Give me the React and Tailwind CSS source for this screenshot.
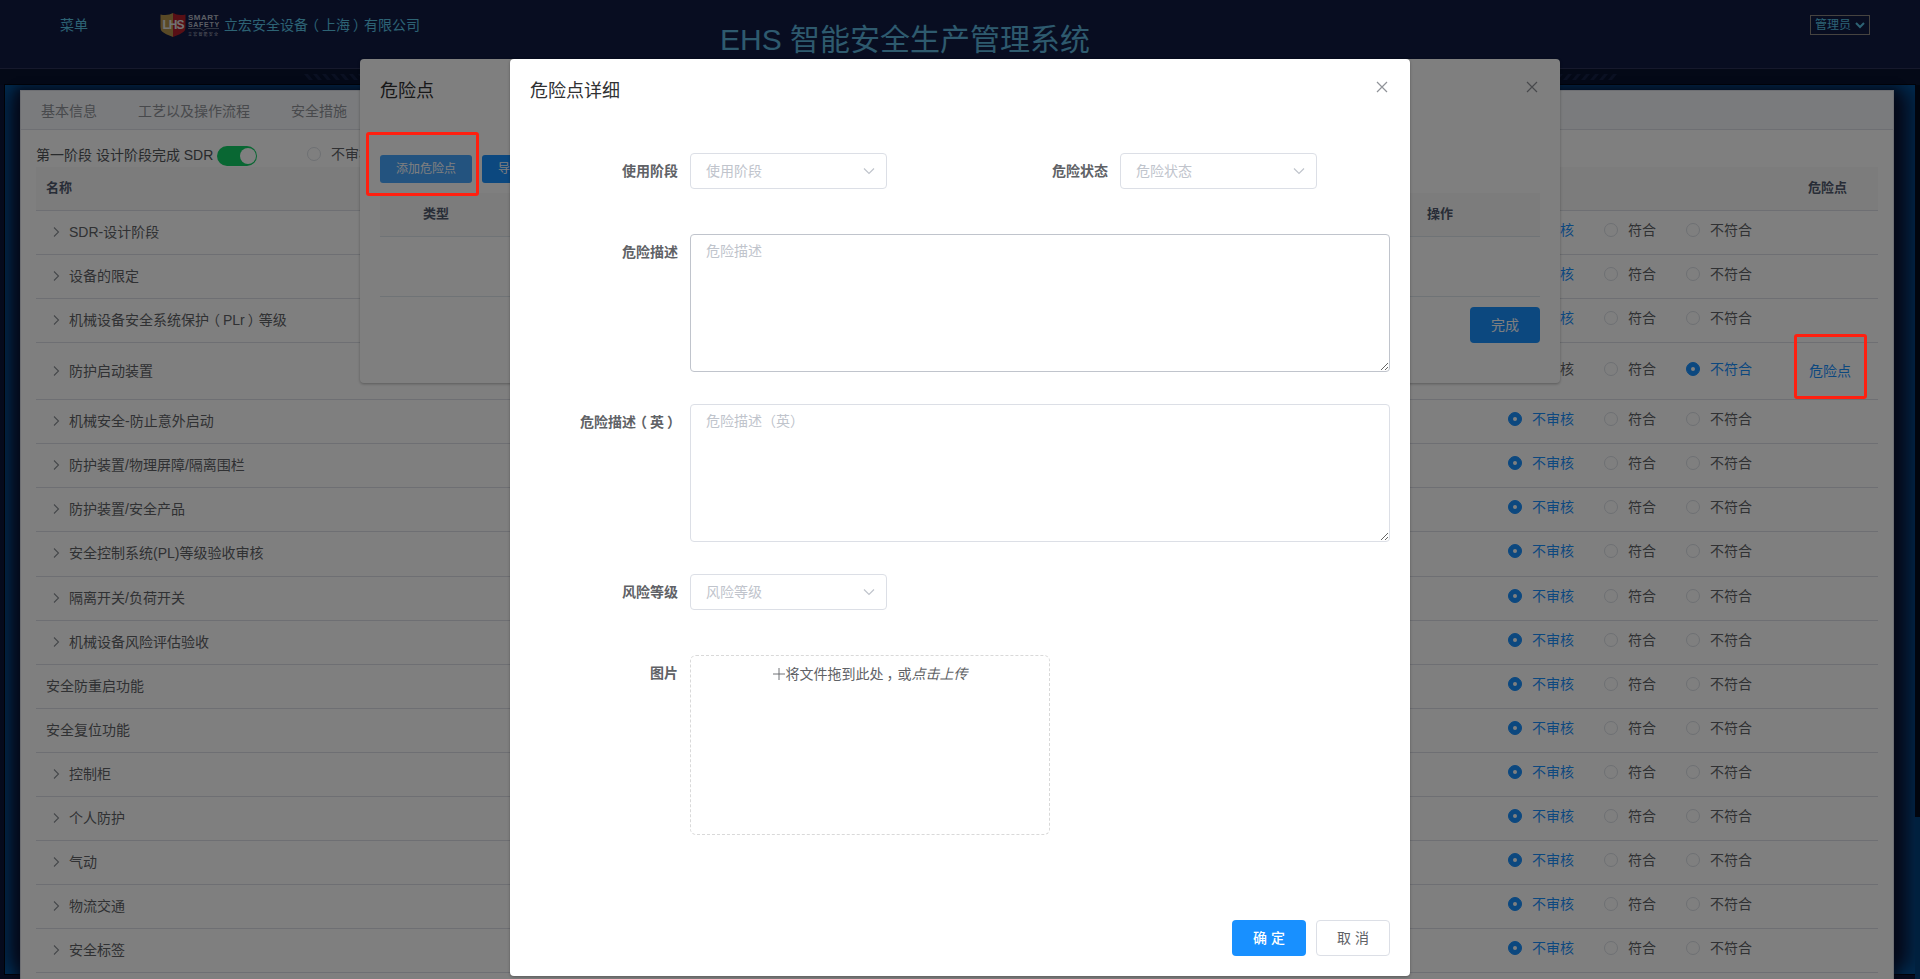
import clsx from "clsx"

// Filas de la tabla de inspección
const filas = [
    { nombre: "SDR-设计阶段", hijos: true },
    { nombre: "设备的限定", hijos: true },
    { nombre: "机械设备安全系统保护（PLr）等级", hijos: true },
    { nombre: "防护启动装置", hijos: true, estado: "不符合", alto: "h-[57px] pb-px" },
    { nombre: "机械安全-防止意外启动", hijos: true },
    { nombre: "防护装置/物理屏障/隔离围栏", hijos: true },
    { nombre: "防护装置/安全产品", hijos: true },
    { nombre: "安全控制系统(PL)等级验收审核", hijos: true, alto: "h-[45px] pb-[2px]" },
    { nombre: "隔离开关/负荷开关", hijos: true },
    { nombre: "机械设备风险评估验收", hijos: true },
    { nombre: "安全防重启功能" },
    { nombre: "安全复位功能" },
    { nombre: "控制柜", hijos: true },
    { nombre: "个人防护", hijos: true },
    { nombre: "气动", hijos: true },
    { nombre: "物流交通", hijos: true },
    { nombre: "安全标签", hijos: true },
]

const opciones = ["不审核", "符合", "不符合"]

// Los paréntesis de ancho completo van centrados en su caja
function Texto({ children }) {
    return children.split(/([（）])/).map((t, i) => {
        if (t === "（") return <span key={i} className="inline-block -translate-x-[3px]">{t}</span>
        if (t === "）") return <span key={i} className="inline-block translate-x-[3px]">{t}</span>
        return t
    })
}

function Radio({ texto, activo }) {
    return (
        <label className="flex items-center gap-[10px] whitespace-nowrap">
            <span
                className={clsx(
                    "flex h-[14px] w-[14px] items-center justify-center rounded-full border",
                    activo ? "border-[#1890ff] bg-[#1890ff]" : "border-[#dcdfe6] bg-white"
                )}
            >
                {activo && <span className="h-1 w-1 rounded-full bg-white" />}
            </span>
            <span className={activo ? "text-[#1890ff]" : "text-[#606266]"}>{texto}</span>
        </label>
    )
}

function Cerrar() {
    return (
        <svg width="12" height="12" viewBox="0 0 12 12" fill="none" stroke="#909399" strokeWidth="1.2">
            <path d="M1 1l10 10M11 1L1 11" />
        </svg>
    )
}

function Logo() {
    return (
        <div className="flex items-center gap-[2px]">
            <div className="relative flex h-6 w-[26px] items-center justify-center">
                <svg className="absolute inset-0" width="26" height="24" viewBox="0 0 26 24">
                    <path d="M0.5 1.5Q8 3 13 0V24Q5 21 2 18.5Q0.5 17 0.5 14Z" fill="#b3934c" />
                    <path d="M25.5 1.5Q18 3 13 0V24Q21 21 24 18.5Q25.5 17 25.5 14Z" fill="#b01f2a" />
                </svg>
                <span className="relative -mt-px text-[12px] font-bold leading-3 tracking-[-1px] text-[#e4e4e4]">LHS</span>
            </div>
            <div className="flex w-[32px] flex-col text-[#b9bdc8]">
                <span className="text-[8px] font-bold leading-[7px] tracking-[0.5px]">SMART</span>
                <span className="text-[7px] font-bold leading-[7px] tracking-[0.7px]">SAFETY</span>
                <svg width="31" height="3" viewBox="0 0 31 3" fill="none" stroke="#8b93a5" strokeWidth="0.7">
                    <path d="M0 0.5H12L15.5 2.5L19 0.5H31" />
                </svg>
                <span className="mt-px whitespace-nowrap text-[4px] leading-[5px] tracking-[1.2px]">立宏智能安全</span>
            </div>
        </div>
    )
}

function Cabecera() {
    return (
        <header className="flex h-[69px] items-start border-b border-[#2c3358] bg-[#101a42] pl-[60px] pr-[50px] text-[#5bc6e8]">
            <span className="mt-[15px] w-[100px] text-sm leading-5">菜单</span>
            <div className="mt-[13px] flex w-[560px] items-center gap-1">
                <Logo />
                <span className="-mt-px text-sm leading-5"><Texto>立宏安全设备（上海）有限公司</Texto></span>
            </div>
            <h1 className="mt-5 whitespace-nowrap text-[30px] leading-10 text-[#5cb4dc]">EHS 智能安全生产管理系统</h1>
            <div className="ml-auto mt-[15px] flex h-5 w-[60px] items-center justify-between border border-[#8c8680] pl-1 pr-1 text-xs">
                <span>管理员</span>
                <svg width="10" height="7" viewBox="0 0 10 7" fill="none" stroke="currentColor" strokeWidth="2">
                    <path d="M1 1l4 4 4-4" />
                </svg>
            </div>
        </header>
    )
}

function Rayas({ className }) {
    return (
        <svg className={className} width="66" height="6" viewBox="0 0 66 6" fill="#142044">
            {[0, 9, 18, 27, 36, 45, 54].map((x) => (
                <path key={x} d={`M${x} 0h4l5 6h-4z`} />
            ))}
        </svg>
    )
}

function Tabla() {
    return (
        <div className="mx-[15px] text-sm">
            <div className="flex h-[44px] items-center border-b border-[#dcdfe6] bg-[#f8f8f8] pl-[10px] font-bold text-[#515a6e]">
                <span className="text-[13px]">名称</span>
                <span className="ml-auto w-[70px] text-[13px]">危险点</span>
            </div>
            {filas.map((f) => (
                <div
                    key={f.nombre}
                    className={clsx("flex items-center border-b border-[#dcdfe6] text-[#606266]", f.alto || "h-[44px] pb-[2px]")}
                >
                    {f.hijos && (
                        <svg className="ml-[17px] mr-[9px]" width="7" height="10" viewBox="0 0 7 10" fill="none" stroke="#8c9096" strokeWidth="1.1">
                            <path d="M1 0.5L5.5 5L1 9.5" />
                        </svg>
                    )}
                    <span className={f.hijos ? "" : "ml-[10px]"}><Texto>{f.nombre}</Texto></span>
                    <div className="mb-1 ml-auto flex w-[301px] gap-[30px]">
                        {opciones.map((o) => (
                            <Radio key={o} texto={o} activo={o === (f.estado || "不审核")} />
                        ))}
                    </div>
                    <span className="w-[69px] text-[#1890ff]">{f.estado === "不符合" ? "危险点" : ""}</span>
                </div>
            ))}
        </div>
    )
}

function Pagina() {
    return (
        <div className="flex h-[979px] flex-col overflow-hidden bg-[#0b1538]">
            <Cabecera />
            <div className="flex h-4 items-center justify-between bg-[#08122e] pb-px pl-[304px] pr-[303px]">
                <Rayas />
                <Rayas className="-scale-x-100" />
            </div>
            <div className="flex">
                <div className="ml-[5px] h-[889px] w-[1910px] bg-[#0b1538] pl-[15px] pr-[21px] pt-[5px] shadow-[inset_0_0_20px_4px_#005ba6,0_0_0_1px_#020510]">
                    <div className="h-[900px] border border-b-0 border-[#dcdfe6] bg-white shadow-[0_2px_8px_4px_rgba(6,14,40,0.6)]">
                        <nav className="flex h-[39px] items-center gap-[41px] border-b border-[#dcdfe6] bg-[#f5f7fa] pl-5 pt-px text-sm text-[#909399]">
                            <span>基本信息</span>
                            <span>工艺以及操作流程</span>
                            <span>安全措施</span>
                        </nav>
                        <div className="flex h-[37px] items-start pl-[15px] pt-[14px] text-sm text-[#515459]">
                            <span className="mt-[1px] w-[181px] whitespace-nowrap leading-5">第一阶段 设计阶段完成 SDR</span>
                            <span className="mt-[2px] flex h-5 w-10 items-center justify-end rounded-full bg-[#13ce66] pr-[1px]">
                                <span className="h-4 w-4 rounded-full bg-white" />
                            </span>
                            <div className="ml-[50px] leading-5">
                                <Radio texto="不审核" />
                            </div>
                        </div>
                        <Tabla />
                    </div>
                </div>
                <div className="flex h-[894px] w-[5px] flex-col justify-end bg-[#020b1c]">
                    <div className="h-[162px] bg-[#00407c]" />
                </div>
            </div>
        </div>
    )
}

function DialogoLista() {
    return (
        <section className="absolute left-[360px] top-[59px] h-[324px] w-[1200px] rounded-sm bg-white px-5 shadow-[0_1px_3px_rgba(0,0,0,0.3)]">
            <header className="flex h-24 items-start justify-between pr-[2px] pt-[22px]">
                <h2 className="text-lg leading-5 text-[#303133]">危险点</h2>
                <Cerrar />
            </header>
            <div className="flex gap-[10px] text-xs text-white">
                <button className="h-7 w-[92px] rounded-[3px] bg-[#46a6ff]">添加危险点</button>
                <button className="h-7 w-[92px] rounded-[3px] bg-[#1890ff] pl-[16px] text-left">导入危险点</button>
            </div>
            <div className="mt-[10px] flex h-[44px] items-center justify-between border-b border-[#dfe6ec] bg-[#f8f8f8] pb-px pl-[43px] pr-[87px] text-[13px] font-bold text-[#515a6e]">
                <span>类型</span>
                <span>操作</span>
            </div>
            <div className="h-[60px] border-b border-[#dfe6ec]" />
            <div className="mt-[10px] flex justify-end">
                <button className="h-9 w-[70px] rounded bg-[#1890ff] text-sm text-white">完成</button>
            </div>
        </section>
    )
}

function Etiqueta({ texto }) {
    return (
        <span className="w-[148px] shrink-0 text-right text-sm font-bold leading-9 text-[#606266]">
            <Texto>{texto}</Texto>
        </span>
    )
}

function Selector({ texto }) {
    return (
        <div className="flex gap-3">
            <Etiqueta texto={texto} />
            <div className="flex h-9 w-[197px] items-center justify-between rounded border border-[#dcdfe6] pl-[15px] pr-[11px] text-sm text-[#c0c4cc]">
                <span>{texto}</span>
                <svg width="12" height="7" viewBox="0 0 12 7" fill="none" stroke="#c0c4cc" strokeWidth="1.2">
                    <path d="M1 0.5l5 5 5-5" />
                </svg>
            </div>
        </div>
    )
}

function AreaTexto({ texto, activa }) {
    return (
        <div className="flex h-[138px] gap-3">
            <Etiqueta texto={texto} />
            <textarea
                placeholder={texto}
                className={clsx(
                    "block h-[138px] w-[700px] resize rounded border bg-white px-[15px] pb-[5px] pt-[6px] text-sm leading-[21px] placeholder:text-[#c0c4cc]",
                    activa ? "border-[#c0c4cc]" : "border-[#dcdfe6]"
                )}
            />
        </div>
    )
}

function DialogoDetalle() {
    return (
        <section className="absolute left-[510px] top-[59px] flex h-[917px] w-[900px] flex-col rounded-sm bg-white px-5 shadow-[0_1px_3px_rgba(0,0,0,0.3)]">
            <header className="flex h-[94px] items-start justify-between pr-[2px] pt-[22px]">
                <h2 className="text-lg leading-5 text-[#303133]">危险点详细</h2>
                <Cerrar />
            </header>
            <div className="flex gap-[73px]">
                <Selector texto="使用阶段" />
                <Selector texto="危险状态" />
            </div>
            <div className="mt-[45px]">
                <AreaTexto texto="危险描述" activa />
            </div>
            <div className="mt-8">
                <AreaTexto texto="危险描述（英）" />
            </div>
            <div className="mt-8">
                <Selector texto="风险等级" />
            </div>
            <div className="mt-[45px] flex gap-3">
                <Etiqueta texto="图片" />
                <div className="flex h-[180px] w-[360px] items-start justify-center rounded-md border border-dashed border-[#d9d9d9] pt-2 text-sm leading-5 text-[#606266]">
                    <svg className="mr-[1px] mt-[4px]" width="12" height="12" viewBox="0 0 12 12" stroke="#606266" strokeWidth="0.9">
                        <path d="M0 6h12M6 0v12" />
                    </svg>
                    <span>将文件拖到此处<span className="inline-block translate-x-[3px]">，</span>或<em>点击上传</em></span>
                </div>
            </div>
            <footer className="mb-5 mt-auto flex justify-end gap-[10px] text-sm">
                <button className="h-9 w-[74px] rounded bg-[#1890ff] font-medium text-white">确 定</button>
                <button className="h-9 w-[74px] rounded border border-[#dcdfe6] bg-white text-[#606266]">取 消</button>
            </footer>
        </section>
    )
}

export default function App() {
    return (
        <div className="relative h-[979px] w-[1920px] overflow-hidden font-['Liberation_Sans','Noto_Sans_CJK_SC',sans-serif]">
            <Pagina />
            <DialogoLista />
            <div className="absolute inset-0 bg-black/50" />
            <DialogoDetalle />
            {/* Marcas rojas */}
            <div className="absolute left-[366px] top-[132px] h-16 w-[113px] rounded-[3px] border-3 border-[#ff2010]" />
            <div className="absolute left-[1794px] top-[334px] h-[65px] w-[73px] rounded-[3px] border-3 border-[#ff2010]" />
        </div>
    )
}
